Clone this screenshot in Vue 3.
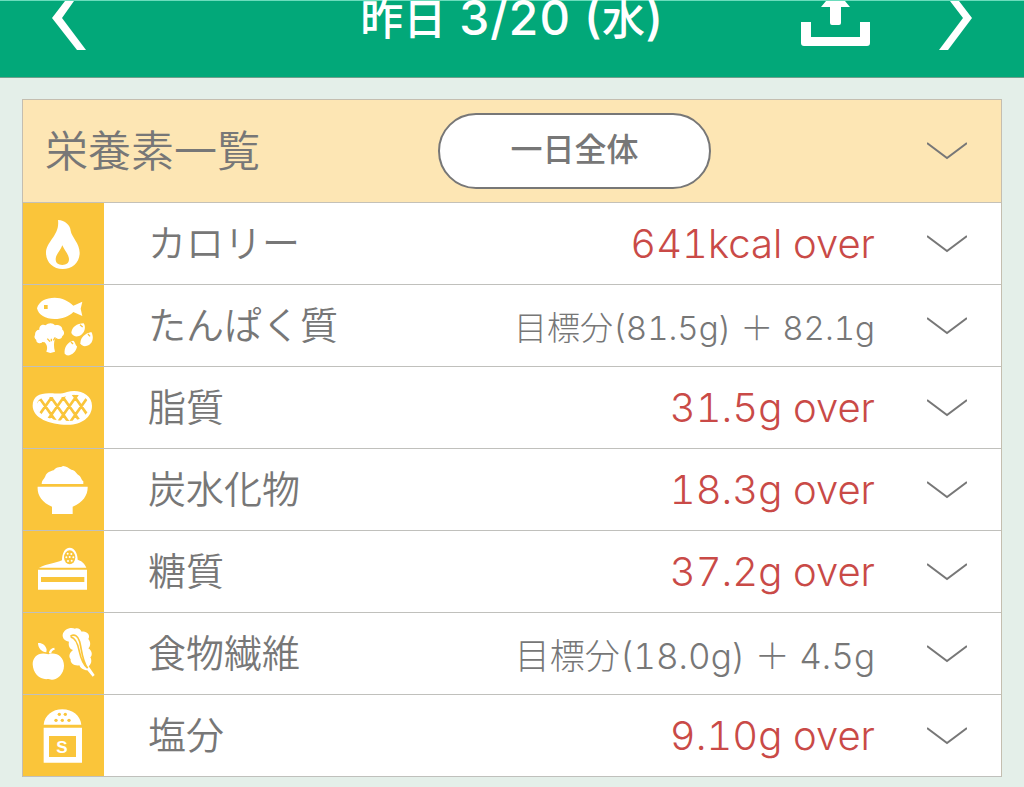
<script setup>
import { ref } from 'vue'

const rows = [
  { icon: 'flame', label: 'カロリー', value: '641kcal over', over: true },
  { icon: 'protein', label: 'たんぱく質', target: '目標分', value: '(81.5g) ＋ 82.1g', size: 'small' },
  { icon: 'fat', label: '脂質', value: '31.5g over', over: true },
  { icon: 'rice', label: '炭水化物', value: '18.3g over', over: true },
  { icon: 'cake', label: '糖質', value: '37.2g over', over: true },
  { icon: 'fiber', label: '食物繊維', target: '目標分', value: '(18.0g) ＋ 4.5g', size: 'medium' },
  { icon: 'salt', label: '塩分', value: '9.10g over', over: true },
]
const selected = ref(null)
</script>

<template>
  <div class="page">
    <header class="bar">
      <button class="nav" type="button" aria-label="前の日">
        <svg width="34" height="50" viewBox="0 0 34 50"><path d="M13 0H22L10 17L34 49H25L0 17Z" fill="#fff" /></svg>
      </button>
      <h1 class="date">昨日<span class="latin"> 3/20 (</span>水<span class="latin">)</span></h1>
      <div class="actions">
        <button class="nav" type="button" aria-label="共有">
          <svg width="70" height="50" viewBox="0 0 70 50">
            <path d="M26 0H45L50 6H41V22Q41 24 39 24H32Q30 24 30 22V6H21ZM1 21H11V36H60V21H70V42Q70 45 67 45H4Q1 45 1 42Z" fill="#fff" />
          </svg>
        </button>
        <button class="nav" type="button" aria-label="次の日">
          <svg width="34" height="50" viewBox="0 0 34 50"><path d="M12 0H21L34 17L10 49H1L25 17Z" fill="#fff" /></svg>
        </button>
      </div>
    </header>

    <main class="card">
      <div class="head">
        <h2 class="title">栄養素一覧</h2>
        <button class="pill" type="button">一日全体</button>
        <button class="toggle" type="button" aria-label="一覧を開く">
          <svg width="40" height="18" viewBox="0 0 40 18"><path class="chev" d="M0 1L20 16L40 1" /></svg>
        </button>
      </div>

      <ul class="list">
        <li v-for="r in rows" :key="r.icon">
          <button class="row" type="button" :aria-pressed="selected === r.icon" @click="selected = r.icon">
            <span class="icon">
              <svg v-if="r.icon === 'flame'" viewBox="9 9 243 243">
                <path fill="#fff" d="M114 60C135 61 151 76 152 92C155 111 179 130 179 158C179 188 157 207 128 207C99 207 78 187 78 158C78 124 120 106 114 60Z" />
                <path fill="#fac53a" d="M127 136C133 151 147 164 147 178C147 189 139 195 127 195C115 195 107 189 107 178C107 163 121 153 127 136Z" />
              </svg>
              <svg v-else-if="r.icon === 'protein'" viewBox="9 255 243 243">
                <g fill="#fff">
                  <path d="M51 325C57 303 78 293 104 293C126 293 146 303 160 317L187 305L182 326L187 348L160 336C146 350 126 357 104 357C76 357 55 345 51 325Z" />
                  <path d="M45 405C45 395 50 389 58 389C57 378 67 371 77 376C84 368 99 368 105 376C116 372 128 380 127 389C134 393 134 405 127 408C126 417 115 420 109 414L105 416C101 427 101 440 105 455L91 459L79 455C84 444 81 434 74 427L67 426C63 433 47 429 49 420C43 416 42 409 45 405Z" />
                  <path d="M154 399C155 382 171 370 191 370C198 379 195 397 184 404C174 412 160 411 154 399Z" />
                  <path d="M181 430C182 411 194 401 214 396C222 411 219 426 207 435C197 441 184 439 181 430Z" />
                  <path d="M134 461C132 442 142 427 159 422C166 424 165 434 171 439C170 454 154 469 140 466Z" />
                </g>
                <path fill="#fac53a" d="M72 315H83V327H72Z" />
                <path fill="none" stroke="#fac53a" stroke-width="4" d="M94 416V424M82 416L90 425M106 412L100 421M180 374L188 381M204 402L210 409M153 426L159 432" />
              </svg>
              <svg v-else-if="r.icon === 'fat'" viewBox="9 9 243 243">
                <clipPath id="steak-face">
                  <path d="M51 124C51 105 67 98 92 99C117 102 130 99 145 95C172 86 207 97 207 125C207 154 180 171 145 171C95 171 51 156 51 124Z" />
                </clipPath>
                <path fill="#fff" d="M38 125C38 97 59 87 91 88C117 89 126 90 141 84C176 73 216 91 216 125C216 160 184 182 145 182C92 183 38 163 38 125Z" />
                <path
                  clip-path="url(#steak-face)"
                  fill="none"
                  stroke="#fac53a"
                  stroke-width="8"
                  d="M14 90L74 175M50 90L110 175M86 90L146 175M122 90L182 175M158 90L218 175M66 90L6 175M102 90L42 175M138 90L78 175M174 90L114 175M210 90L150 175M246 90L186 175"
                />
              </svg>
              <svg v-else-if="r.icon === 'rice'" viewBox="9 255 243 243">
                <path fill="#fff" d="M65 360C66 347 72 347 76 337C80 325 92 321 101 319C111 306 122 312 129 306C140 306 145 313 154 317C165 318 168 327 174 332C184 337 184 348 190 352V360ZM53 368H203C204 392 190 415 158 428V450H96V428C65 415 51 392 53 368Z" />
              </svg>
              <svg v-else-if="r.icon === 'cake'" viewBox="9 9 243 243">
                <path fill="#fff" d="M57 119C84 107 107 105 126 97C126 75 135 59 149 59C164 59 173 77 173 95C182 98 193 103 199 119ZM54 125H201V185H54Z" />
                <ellipse cx="149" cy="88" rx="17" ry="21" fill="#fac53a" />
                <g fill="#fff"><circle cx="143" cy="77" r="3" /><circle cx="154" cy="78" r="3" /><circle cx="139" cy="88" r="3" /><circle cx="149" cy="87" r="3" /><circle cx="160" cy="88" r="3" /><circle cx="144" cy="99" r="3" /><circle cx="155" cy="98" r="3" /></g>
                <path fill="#fac53a" d="M63 147H193V162H63Z" />
              </svg>
              <svg v-else-if="r.icon === 'fiber'" viewBox="9 255 243 243">
                <g fill="#fff">
                  <path d="M54 345C66 344 78 352 80 365L79 373C65 372 54 360 54 345ZM87 376C87 367 94 360 103 359L104 365C97 366 94 371 94 377Z" />
                  <path d="M85 379C108 371 132 386 132 413C132 438 112 455 96 455C88 455 85 452 79 454C57 453 39 435 38 409C38 386 57 370 85 379Z" />
                  <path d="M128 320C131 304 151 296 165 302C174 298 182 305 185 311C198 307 213 320 205 333C213 342 212 355 205 361C217 369 218 382 211 388C217 399 213 409 206 415L224 441L218 446L202 427C190 427 181 420 178 412C164 415 150 406 152 394C144 384 150 373 159 366C149 363 144 352 147 341C134 338 127 330 128 320Z" />
                </g>
                <path fill="none" stroke="#fac53a" stroke-width="5" d="M151 325C165 316 174 326 178 338C185 357 184 395 203 421M152 327C166 329 174 350 178 370C183 393 188 407 202 420" />
              </svg>
              <svg v-else viewBox="9 15 243 243">
                <path fill="#fff" d="M71 104C74 76 97 58 127 58C158 58 181 77 184 104ZM71 113H186V218H71Z" />
                <path fill="#fac53a" d="M87 138H168V201H87Z" />
                <g fill="#fac53a"><circle cx="118" cy="73" r="5" /><circle cx="136" cy="73" r="5" /><circle cx="108" cy="91" r="5" /><circle cx="127" cy="91" r="5" /><circle cx="147" cy="91" r="5" /></g>
                <text class="s" x="126" y="189" text-anchor="middle">S</text>
              </svg>
            </span>
            <span class="label">{{ r.label }}</span>
            <span class="value" :class="[r.size, { over: r.over }]">{{ r.target }}{{ r.value }}</span>
            <svg class="arrow" width="40" height="18" viewBox="0 0 40 18"><path class="chev" d="M0 1L20 16L40 1" /></svg>
          </button>
        </li>
      </ul>
    </main>
  </div>
</template>

<style>
html,
body {
  margin: 0;
  background: #e4efe9;
}
</style>

<style scoped>
.page {
  font-family: Inter, "Noto Sans CJK JP", sans-serif;
  font-weight: 350;
  font-variant-numeric: tabular-nums;
  color: #777;
}
button {
  margin: 0;
  padding: 0;
  border: 0;
  background: none;
  font: inherit;
  color: inherit;
  cursor: pointer;
}
svg {
  display: block;
}
.bar {
  display: grid;
  grid-template-columns: 1fr auto 1fr;
  align-items: start;
  justify-items: start;
  box-sizing: border-box;
  height: 78px;
  padding: 0 52px;
  background: #02a879;
  border-top: 1px solid #6bdcbc;
  border-bottom: 1px solid #6fa08d;
}
.date {
  margin: 0;
  font-size: 43px;
  line-height: 34px;
  font-weight: 500;
  color: #fff;
  white-space: pre;
}
.latin {
  font-size: 48px;
}
.actions {
  display: flex;
  gap: 68px;
  justify-self: end;
}
.card {
  margin: 21px 22px 11px;
  border: 1px solid #c4beb0;
  border-bottom: 0;
  background: #fff;
}
.head {
  display: grid;
  grid-template-columns: minmax(0, 20fr) 273px minmax(0, 11fr) 40px;
  align-items: center;
  height: 102px;
  padding: 0 34px 0 22px;
  background: #fde6b4;
  border-bottom: 1px solid #c4c1b8;
}
.title {
  margin: 0;
  font-size: 43px;
  line-height: 60px;
  font-weight: 350;
}
.pill {
  height: 76px;
  border: 2px solid #777;
  border-radius: 38px;
  background: #fff;
  font-size: 32px;
  line-height: 68px;
  padding-bottom: 2px;
  font-weight: 500;
}
.toggle {
  grid-column: 4;
}
.chev {
  fill: none;
  stroke: #777;
  stroke-width: 2;
}
.list {
  margin: 0;
  padding: 0;
  list-style: none;
}
.row {
  display: flex;
  align-items: center;
  width: 100%;
  padding-right: 34px;
  border-bottom: 1px solid #c0c0bc;
  text-align: left;
}
.icon {
  width: 81px;
  height: 81px;
  background: #fac53a;
}
.s {
  font-family: "Liberation Sans", sans-serif;
  font-size: 51px;
  font-weight: 700;
  fill: #fff;
}
.label {
  margin-left: 44px;
  font-size: 38px;
  line-height: 54px;
  padding-bottom: 2px;
}
.value {
  margin-left: auto;
  margin-right: 52px;
  font-size: 40px;
  line-height: 56px;
  font-weight: 300;
  white-space: pre;
}
.over {
  color: #c94a47;
}
.small,
.medium {
  padding-top: 4px;
}
.small {
  font-size: 33px;
}
.medium {
  font-size: 35px;
}
</style>
